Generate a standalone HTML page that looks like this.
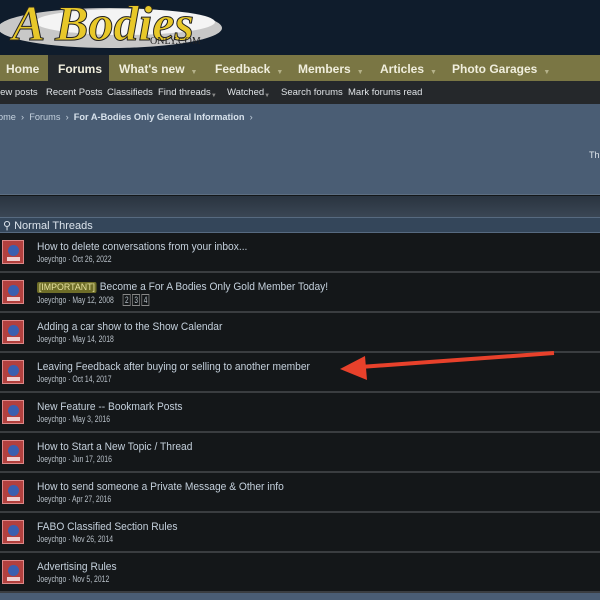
<!DOCTYPE html>
<html><head><style>
*{margin:0;padding:0;box-sizing:border-box}
body{width:600px;height:600px;overflow:hidden;background:#141719;font-family:"Liberation Sans",sans-serif;position:relative}
.hdr{position:absolute;left:0;top:0;width:600px;height:55px;background:#0f1c2c;overflow:hidden}
.nav{position:absolute;top:55px;left:0;width:600px;height:26px;background:#7a7644;font-weight:bold;font-size:12px;color:#f0eedd}
.nav span{position:absolute;top:7px}
.nav .act{position:absolute;left:48px;top:0;width:61px;height:26px;background:#24282c}
.car{color:#b5b28a;font-size:7px;margin-left:6px;vertical-align:2px}
.sub{position:absolute;top:81px;left:0;width:600px;height:23px;background:#25282b;font-size:9.5px;color:#dfe3e6}
.sub span{position:absolute;top:6px}
.crumb{position:absolute;top:104px;left:0;width:600px;height:91px;background:#4a5d74;border-bottom:1px solid #5d6e82}
.crumb .t{position:absolute;top:8px;font-size:9.5px;color:#c5d2df;transform:scaleX(0.97);transform-origin:left}
.strip{position:absolute;top:196px;left:0;width:600px;height:21px;background:linear-gradient(#2a3440,#3a4654)}
.nt{position:absolute;top:217px;left:0;width:600px;height:16px;background:#34465a;border-top:1px solid #576a80;border-bottom:1px solid #576a80;color:#dce4ec;font-size:11px;padding:1px 0 0 3px}
.row{position:absolute;left:0;width:600px;height:40px;background:#141719;border-bottom:2px solid #3a3d40}
.av{position:absolute;left:2px;top:7px;width:22px;height:24px;background:#b2403e;border:1px solid #d88}
.av i{position:absolute;left:5px;top:4px;width:11px;height:11px;border-radius:50%;background:#3a5fb0}
.av b{position:absolute;left:4px;top:16px;width:13px;height:4px;background:#f0d0d0}
.ti{position:absolute;left:37px;top:8px;font-size:11px;color:#c4d0dc;white-space:nowrap;transform:scaleX(0.93);transform-origin:left}
.me{position:absolute;left:37px;top:21px;font-size:9.5px;color:#b8c0c8;white-space:nowrap;transform:scaleX(0.72);transform-origin:left}
.imp{background:#6e6d28;color:#e8e4a0;border-radius:2px;padding:0 2px;font-size:9.5px}
.pg{display:inline-block;border:1px solid #888;font-size:9px;padding:0 2px;margin-left:2px;line-height:10px}
.bot{position:absolute;top:593px;left:0;width:600px;height:7px;background:#4a5d74}
</style></head><body>
<div class="hdr">
<svg width="230" height="55" style="position:absolute;left:0;top:0">
<ellipse cx="110" cy="28" rx="112" ry="20" fill="#c8c8c8"/>
<ellipse cx="125" cy="22" rx="90" ry="13" fill="#f4f4f4"/>
<text x="12" y="40" font-family="Liberation Serif" font-style="italic" font-weight="bold" font-size="50" fill="#e8c829" stroke="#222" stroke-width="1">A Bodies</text>
<text x="150" y="44" font-family="Liberation Serif" font-size="10" fill="#222">ONLY.COM</text>
</svg></div>
<div class="nav"><div class="act"></div>
<span style="left:6px">Home</span><span style="left:58px">Forums</span>
<span style="left:119px">What's new<span class="car">▼</span></span>
<span style="left:215px">Feedback<span class="car">▼</span></span>
<span style="left:298px">Members<span class="car">▼</span></span>
<span style="left:380px">Articles<span class="car">▼</span></span>
<span style="left:452px">Photo Garages<span class="car">▼</span></span></div>
<div class="sub"><span style="left:-2px">iew posts</span><span style="left:46px">Recent Posts</span><span style="left:107px">Classifieds</span><span style="left:158px">Find threads <span style="font-size:6px;color:#888">▼</span></span><span style="left:227px">Watched <span style="font-size:6px;color:#888">▼</span></span><span style="left:281px">Search forums</span><span style="left:348px">Mark forums read</span></div>
<div class="crumb"><span class="t" style="left:-2px">ome &nbsp;›&nbsp; Forums &nbsp;›&nbsp; <b style="color:#d8e2ec">For A-Bodies Only General Information</b> &nbsp;›</span>
<span style="position:absolute;left:589px;top:46px;font-size:9px;color:#e0e6ec">Th</span></div>
<div class="strip"></div>
<div class="nt">⚲ Normal Threads</div>
<div class="row" style="top:233px"><div class="av"><i></i><b></b></div><div class="ti">How to delete conversations from your inbox...</div><div class="me">Joeychgo · Oct 26, 2022</div></div>
<div class="row" style="top:273px"><div class="av"><i></i><b></b></div><div class="ti"><span class="imp">[IMPORTANT]</span> Become a For A Bodies Only Gold Member Today!</div><div class="me">Joeychgo · May 12, 2008 &nbsp;&nbsp;&nbsp;<span class="pg">2</span><span class="pg">3</span><span class="pg">4</span></div></div>
<div class="row" style="top:313px"><div class="av"><i></i><b></b></div><div class="ti">Adding a car show to the Show Calendar</div><div class="me">Joeychgo · May 14, 2018</div></div>
<div class="row" style="top:353px"><div class="av"><i></i><b></b></div><div class="ti">Leaving Feedback after buying or selling to another member</div><div class="me">Joeychgo · Oct 14, 2017</div></div>
<div class="row" style="top:393px"><div class="av"><i></i><b></b></div><div class="ti">New Feature -- Bookmark Posts</div><div class="me">Joeychgo · May 3, 2016</div></div>
<div class="row" style="top:433px"><div class="av"><i></i><b></b></div><div class="ti">How to Start a New Topic / Thread</div><div class="me">Joeychgo · Jun 17, 2016</div></div>
<div class="row" style="top:473px"><div class="av"><i></i><b></b></div><div class="ti">How to send someone a Private Message &amp; Other info</div><div class="me">Joeychgo · Apr 27, 2016</div></div>
<div class="row" style="top:513px"><div class="av"><i></i><b></b></div><div class="ti">FABO Classified Section Rules</div><div class="me">Joeychgo · Nov 26, 2014</div></div>
<div class="row" style="top:553px"><div class="av"><i></i><b></b></div><div class="ti">Advertising Rules</div><div class="me">Joeychgo · Nov 5, 2012</div></div>
<div class="bot"></div>
<svg width="600" height="600" style="position:absolute;left:0;top:0">
<line x1="554" y1="353" x2="360" y2="367" stroke="#e8412b" stroke-width="4"/>
<polygon points="340,369 365,356 367,380" fill="#e8412b"/>
</svg>
</body></html>
